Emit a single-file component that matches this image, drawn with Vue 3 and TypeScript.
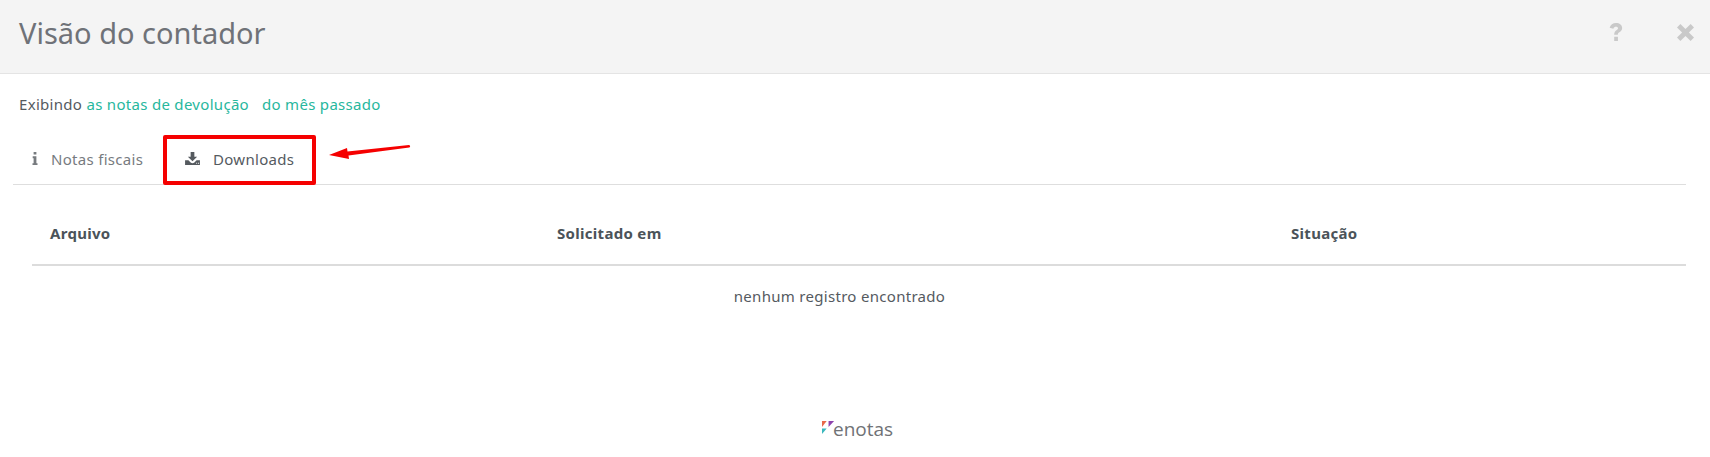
<template>
  <div class="page">
    <header class="modal-header">
      <h1 class="modal-title">Visão do contador</h1>
      <div class="modal-actions">
        <svg class="action-icon action-icon--help" viewBox="1 1 12 17" aria-hidden="true">
          <path d="M1 5.600C1.800 2.600 4 1 7 1c3.400 0 5.800 1.900 5.800 4.700 0 2-1.100 3-2.600 4-1.100.7-1.500 1.200-1.500 2.500H5.300c0-2.300.7-3.400 2.100-4.400 1-.7 1.500-1.100 1.500-1.900 0-.9-.8-1.400-1.900-1.400-1.200 0-2 .6-2.500 1.900L1 5.600z" />
          <rect x="5.300" y="14" width="3.500" height="4" />
        </svg>
        <svg class="action-icon action-icon--close" viewBox="1 1 16 16" aria-hidden="true">
          <path d="M4.200 1 9 5.800 13.800 1 17 4.200 12.200 9l4.800 4.800-3.200 3.200L9 12.200 4.200 17 1 13.800 5.800 9 1 4.200z" />
        </svg>
      </div>
    </header>

    <section class="content">
      <p class="filter-line">
        Exibindo <a class="filter-link">as notas de devolução</a><a class="filter-link filter-link--period">do mês passado</a>
      </p>

      <nav class="tabs">
        <div class="tab tab--muted">
          <svg class="tab-icon tab-icon--info" viewBox="0 0 6 14" aria-hidden="true">
            <path d="M1.500 0h3v2.800h-3zM.5 4.700h4v7.300h1.200v2H.3v-2h1.200V6.700H.5z" />
          </svg>
          <span>Notas fiscais</span>
        </div>
        <div class="tab tab--active">
          <svg class="tab-icon tab-icon--download" viewBox="0 0 16 14" aria-hidden="true">
            <path d="M6 0h4v5h3l-5 5-5-5h3z" />
            <path fill-rule="evenodd" d="M0 9h3.600L6 11.400c1.100 1 2.900 1 4 0L12.400 9H16v5H0zm12 2.700h1v1h-1zm2 0h1v1h-1z" />
          </svg>
          <span>Downloads</span>
        </div>
      </nav>

      <table class="grid">
        <thead>
          <tr>
            <th v-for="col in columns" :key="col.label" :style="{ width: col.width + 'px' }">{{ col.label }}</th>
          </tr>
        </thead>
        <tbody>
          <tr>
            <td colspan="3">nenhum registro encontrado</td>
          </tr>
        </tbody>
      </table>
    </section>

    <footer class="brand">
      <svg class="brand-mark" viewBox="0 0 15 15" aria-hidden="true">
        <polygon points="0,0 5,0 0,6.500" fill="#e8694a" />
        <polygon points="7,0 13,0 7,6.500" fill="#8e44ad" />
        <polygon points="0,8 5,8 0,14" fill="#3bb8bd" />
      </svg>
      <span class="brand-name">enotas</span>
    </footer>

    <!-- annotation drawn over the screenshot -->
    <div class="callout-box"></div>
    <svg class="callout-arrow" viewBox="0 0 82 18" aria-hidden="true">
      <path d="M0 11 18 4l.5 3.500L80 1c1.300-.1 1.600 2.400.3 2.600L19.500 11.500l.5 3.500z" fill="#f50000" />
    </svg>
  </div>
</template>

<script setup lang="ts">
const columns = [
  { label: 'Arquivo', width: 507 },
  { label: 'Solicitado em', width: 734 },
  { label: 'Situação', width: 413 },
]
</script>

<style>
html,
body {
  margin: 0;
  background: #fff;
}
</style>

<style scoped>
.page {
  position: relative;
  width: 1710px;
  height: 457px;
  overflow: hidden;
  background: #fff;
  font-family: 'Noto Sans', 'Open Sans', sans-serif;
  font-size: 15px;
  letter-spacing: 0.3px;
  color: #555a5f;
}

.modal-header {
  display: flex;
  align-items: center;
  justify-content: space-between;
  box-sizing: border-box;
  height: 74px;
  padding: 0 16px 9px 19px;
  background: #f4f4f4;
  border-bottom: 1px solid #e4e4e4;
}

.modal-title {
  margin: 0;
  font-size: 29px;
  font-weight: 400;
  letter-spacing: 0;
  color: #6f7278;
}

.modal-actions {
  display: flex;
  align-items: center;
  gap: 54px;
}

.action-icon {
  display: block;
  fill: #c9c9c9;
}

.action-icon--help {
  width: 14px;
  height: 18px;
}

.action-icon--close {
  width: 17px;
  height: 17px;
}

.content {
  padding: 0 24px 0 13px;
}

.filter-line {
  margin: 0;
  padding: 20px 0 0 6px;
  height: 20px;
  line-height: 20px;
  white-space: nowrap;
}

.filter-link {
  color: #27b79d;
}

.filter-link--period {
  margin-left: 13px;
}

.tabs {
  display: flex;
  align-items: center;
  box-sizing: border-box;
  height: 50px;
  margin-top: 21px;
  padding-bottom: 2px;
  border-bottom: 1px solid #dedede;
}

.tab {
  display: flex;
  align-items: center;
}

.tab--muted {
  padding-left: 19px;
  width: 131px;
  box-sizing: border-box;
  color: #777b7f;
}

.tab--active {
  padding-left: 41px;
  color: #555a5f;
}

.tab-icon {
  display: block;
  fill: currentColor;
}

.tab-icon--info {
  width: 6px;
  height: 13px;
  margin-right: 13px;
}

.tab-icon--download {
  width: 15px;
  height: 13px;
  margin-right: 13px;
}

.grid {
  width: 1654px;
  margin: 0 0 0 19px;
  border-collapse: collapse;
  table-layout: fixed;
}

.grid th {
  box-sizing: border-box;
  height: 80px;
  padding: 16px 0 0 18px;
  border-bottom: 2px solid #dcdcdc;
  text-align: left;
  font-weight: 700;
  color: #4b5359;
}

.grid td {
  height: 57px;
  padding-right: 40px;
  text-align: center;
}

.brand {
  position: absolute;
  left: 822px;
  top: 420px;
  display: flex;
  align-items: center;
  gap: 0;
}

.brand-mark {
  display: block;
  width: 14px;
  height: 14px;
  margin-top: -3px;
  margin-right: -3px;
}

.brand-name {
  font-family: 'Open Sans', sans-serif;
  font-size: 19px;
  line-height: 18px;
  letter-spacing: 0;
  color: #707276;
}

.callout-box {
  position: absolute;
  left: 163px;
  top: 135px;
  width: 153px;
  height: 50px;
  box-sizing: border-box;
  border: 4px solid #f50000;
  border-radius: 2px;
}

.callout-arrow {
  position: absolute;
  left: 329px;
  top: 144px;
  width: 82px;
  height: 18px;
}
</style>
